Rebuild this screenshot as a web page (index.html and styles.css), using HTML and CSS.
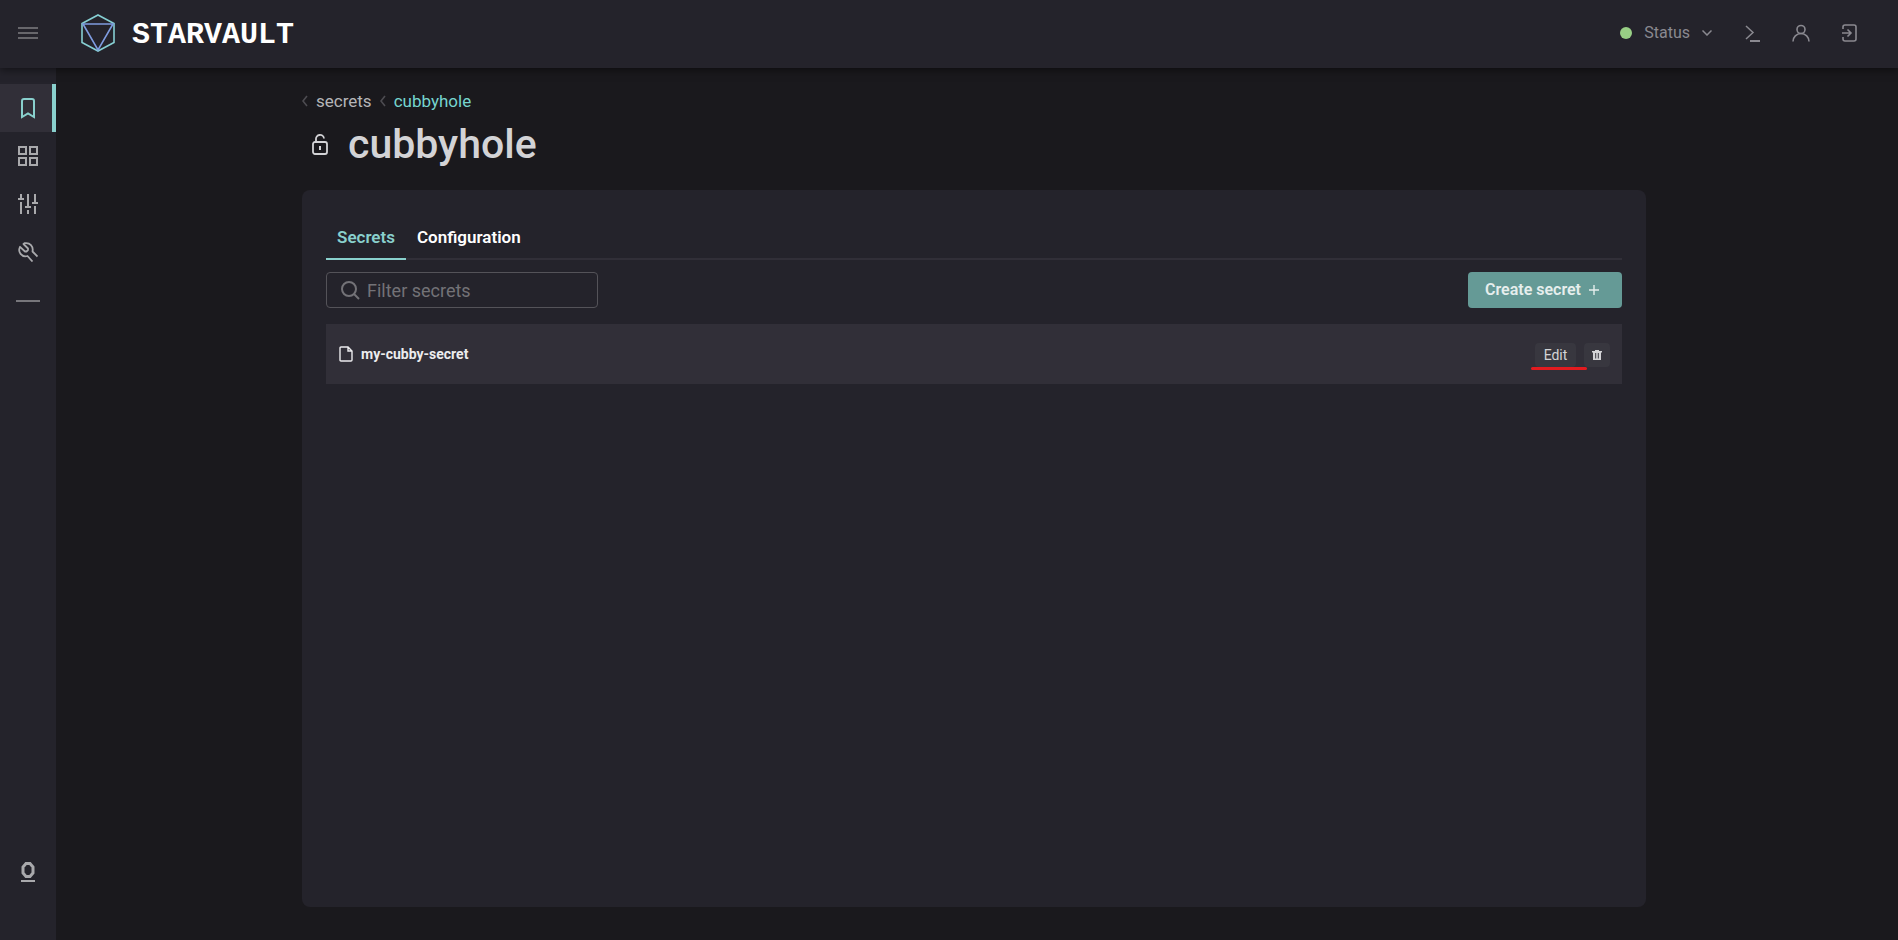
FILE: index.html
```html
<!DOCTYPE html>
<html lang="en">
<head>
<meta charset="utf-8">
<title>StarVault – cubbyhole</title>
<link rel="stylesheet" href="styles.css">
</head>
<body>
<header class="topbar">
  <button class="icon-btn menu-btn" aria-label="Toggle menu">
    <svg width="20" height="12" viewBox="0 0 20 12"><path d="M0 1h20M0 6h20M0 11h20" stroke-width="2"/></svg>
  </button>
  <a class="brand" href="#">
    <svg width="34" height="38" viewBox="0 0 34 38">
      <path d="M17 1 33 9.500V28.500L17 37 1 28.500V9.500Z" stroke="#86cfd3" stroke-width="1.600"/>
      <path d="M2 10h30L17 36Z" stroke="#7f9ce0" stroke-width="1.600"/>
    </svg>
    <span class="wordmark">STARVAULT</span>
  </a>
  <nav class="top-actions" aria-label="Account">
    <button class="status"><span class="status-dot"></span>Status
      <svg width="10" height="6" viewBox="0 0 10 6"><path d="M.5.5 5 5 9.500.5" stroke-width="1.500"/></svg>
    </button>
    <button class="icon-btn" aria-label="Console">
      <svg width="16" height="18" viewBox="0 0 16 18"><path d="M1 2l7 6.500L1 15" stroke-width="1.500"/><path d="M5 17h10" stroke-width="2"/></svg>
    </button>
    <button class="icon-btn" aria-label="User">
      <svg width="18" height="18" viewBox="0 0 18 18"><circle cx="9" cy="5.500" r="4" stroke-width="1.600"/><path d="M1 17.500c0-4.500 3.500-8 8-8s8 3.500 8 8" stroke-width="1.600"/></svg>
    </button>
    <button class="icon-btn" aria-label="Log out">
      <svg width="16" height="18" viewBox="0 0 16 18"><path d="M2 5V3q0-2 2-2h9q2 0 2 2v12q0 2-2 2H4q-2 0-2-2v-2M1 9h9M6.500 5.500 10 9l-3.500 3.500" stroke-width="1.600"/></svg>
    </button>
  </nav>
</header>
<div class="shell">
  <nav class="sidebar" aria-label="Main">
    <a class="side-link active" href="#" aria-label="Secrets">
      <svg width="16" height="22" viewBox="0 0 16 22"><path d="M2 20V4q0-2 2-2h8q2 0 2 2v16l-6-3.500Z" stroke-width="2"/></svg>
    </a>
    <a class="side-link" href="#" aria-label="Dashboard">
      <svg width="20" height="20" viewBox="0 0 20 20"><path d="M1 1h7v7H1ZM12 1h7v7h-7ZM1 12h7v7H1ZM12 12h7v7h-7Z" stroke-width="2"/></svg>
    </a>
    <a class="side-link" href="#" aria-label="Policies">
      <svg width="20" height="20" viewBox="0 0 20 20"><path d="M3 0v6M3 8v12M0 5h6M10 0v12M10 16v4M7 13h6M17 0v8M17 12v8M14 9h6" stroke-width="2"/></svg>
    </a>
    <a class="side-link" href="#" aria-label="Tools">
      <svg width="20" height="20" viewBox="0 0 20 20"><path d="M19.500 14.500 14.500 9.500C15.600 4.500 12 .2 6.500 1.200L5.500 2l4.500 4.500v1.500L8.500 9.500H7L2 4.800C-.5 10 3.500 15.500 9.500 14l5 5.500" stroke-width="1.800" stroke-linejoin="round"/></svg>
    </a>
    <hr class="side-rule">
    <a class="side-foot" href="#" aria-label="About">
      <svg width="14" height="20" viewBox="0 0 14 20"><path d="M5 1.500h4L12 5v6l-3 3.500H5L2 11V5Z" stroke-width="3"/><path d="M0 19h14" stroke-width="2"/></svg>
    </a>
  </nav>
  <main class="content">
    <nav class="crumbs" aria-label="Breadcrumb">
      <svg width="6" height="12" viewBox="0 0 6 12"><path d="M5 1 1 6l4 5" stroke-width="1.600"/></svg>
      <a href="#">secrets</a>
      <svg width="6" height="12" viewBox="0 0 6 12"><path d="M5 1 1 6l4 5" stroke-width="1.600"/></svg>
      <a class="current" href="#" aria-current="page">cubbyhole</a>
    </nav>
    <div class="heading">
      <svg width="16" height="21" viewBox="0 0 16 21"><path d="M4 8V5.500a4 4 0 0 1 8-1" stroke-width="1.800"/><rect x="1" y="8" width="14" height="12" rx="2" stroke-width="1.800"/><path d="M8 12v4" stroke-width="2"/></svg>
      <h1>cubbyhole</h1>
    </div>
    <section class="panel">
      <nav class="tabs" aria-label="Engine">
        <a class="tab selected" href="#">Secrets</a>
        <a class="tab" href="#">Configuration</a>
      </nav>
      <div class="toolbar">
        <label class="filter">
          <svg width="19" height="19" viewBox="0 0 19 19"><circle cx="8" cy="8" r="7" stroke-width="2"/><path d="m13 13 5 5" stroke-width="2"/></svg>
          <input type="text" placeholder="Filter secrets" aria-label="Filter secrets">
        </label>
        <button class="create">Create secret
          <svg width="10" height="12" viewBox="0 0 10 12"><path d="M0 6h10M5 1v10" stroke-width="1.400"/></svg>
        </button>
      </div>
      <div class="row">
        <a class="secret" href="#">
          <svg width="14" height="16" viewBox="0 0 14 16"><path d="M1 2q0-1 1-1h7l4 4v9q0 1-1 1H2q-1 0-1-1ZM9 1v4h4" stroke-width="1.400"/></svg>
          my-cubby-secret
        </a>
        <div class="row-actions">
          <button class="chip edit">Edit</button>
          <button class="chip trash" aria-label="Delete">
            <svg width="10" height="10" viewBox="0 0 10 10"><path d="M3 0h4v1h3v1.500H9V10H1V2.500H0V1h3ZM3.200 3v5.500h1V3ZM5.800 3v5.500h1V3Z" fill-rule="evenodd"/></svg>
          </button>
        </div>
      </div>
    </section>
  </main>
</div>
</body>
</html>
```
FILE: styles.css
```css
* { box-sizing: border-box; }
body {
  margin: 0;
  min-height: 100vh;
  display: flex;
  flex-direction: column;
  background: #1a191d;
  color: #d3d3d6;
  font-family: Roboto, "Noto Sans", sans-serif;
  font-size: 17px;
  line-height: 24px;
}
a { color: inherit; text-decoration: none; }
button { border: 0; background: none; color: inherit; font: inherit; padding: 0; cursor: pointer; }
svg { display: block; flex: none; fill: none; stroke: currentColor; }

.topbar {
  position: relative;
  display: flex;
  align-items: center;
  height: 68px;
  padding: 0 25px 2px 0;
  background: #24232b;
  box-shadow: 0 2px 8px rgba(0, 0, 0, .5);
}
.icon-btn { display: grid; place-items: center; width: 48px; height: 48px; }
.menu-btn { width: 56px; margin-right: 25px; color: #67666b; }
.brand { display: flex; align-items: center; gap: 17px; }
.wordmark {
  padding-top: 3px;
  color: #fff;
  font: bold 30px/36px "Liberation Mono", monospace;
}
.top-actions { display: flex; align-items: center; margin-left: auto; color: #8a8990; }
.status { display: flex; align-items: center; gap: 12px; margin-right: 17px; font-size: 16px; }
.status-dot { width: 12px; height: 12px; border-radius: 50%; background: #98cf85; }

.shell { flex: 1; display: flex; padding-right: 6px; }
.sidebar {
  display: flex;
  flex-direction: column;
  align-items: center;
  width: 56px;
  padding: 16px 0 58px;
  background: #24232b;
  color: #a9a9ac;
}
.side-link { display: grid; place-items: center; width: 100%; height: 48px; }
.side-link.active {
  background: #312f38;
  color: #89d0cd;
  box-shadow: inset -4px 0 #89d0cd;
}
.side-rule { width: 24px; height: 2px; margin: 24px 0 0; border: 0; background: #77767b; }
.side-foot { margin-top: auto; }

.content {
  flex: 1;
  display: flex;
  flex-direction: column;
  width: 100%;
  max-width: 1344px;
  margin: 0 auto;
  padding: 21px 0 33px;
}
.crumbs { display: flex; align-items: center; gap: 8px; color: #b5b5b8; }
.crumbs svg { color: #4d4c51; }
.crumbs .current { color: #76d5cf; }
.heading { display: flex; align-items: center; gap: 20px; padding: 3px 0 17px 10px; }
h1 { margin: 0; font-size: 41px; font-weight: 500; line-height: 57px; }

.panel { flex: 1; padding: 24px; border-radius: 8px; background: #24232b; }
.tabs { display: flex; height: 46px; border-bottom: 2px solid #312f38; }
.tab {
  height: 46px;
  padding: 11px 11px 0;
  color: #fff;
  font-weight: 600;
}
.tab.selected { color: #89d0cd; border-bottom: 2px solid #89d0cd; }
.toolbar { display: flex; justify-content: space-between; margin: 12px 0 16px; }
.filter {
  display: flex;
  align-items: center;
  gap: 7px;
  width: 272px;
  height: 36px;
  padding: 0 14px;
  border: 1px solid #545359;
  border-radius: 4px;
  color: #737277;
}
.filter input {
  flex: 1;
  min-width: 0;
  padding: 2px 0 0;
  border: 0;
  outline: 0;
  background: none;
  color: #d3d3d6;
  font: inherit;
  font-size: 18px;
}
.filter input::placeholder { color: #737277; opacity: 1; }
.create {
  display: flex;
  align-items: center;
  gap: 8px;
  height: 36px;
  padding: 0 23px 0 17px;
  border-radius: 4px;
  background: #659a96;
  color: #e6eeed;
  font-size: 16px;
  font-weight: 600;
}
.row {
  display: flex;
  align-items: center;
  justify-content: space-between;
  height: 60px;
  padding: 0 12px 0 13px;
  background: #312f38;
}
.secret { display: flex; align-items: center; gap: 8px; color: #ececee; font-size: 14px; font-weight: 700; }
.row-actions { display: flex; gap: 8px; padding-top: 2px; }
.chip { display: grid; place-items: center; height: 24px; border-radius: 4px; background: #38373f; font-size: 14px; }
.edit { position: relative; width: 41px; }
.edit::after {
  content: "";
  position: absolute;
  left: -4px;
  right: -11px;
  bottom: -3px;
  height: 3px;
  border-radius: 2px;
  background: #e31b1f;
}
.trash { width: 26px; }
.trash svg { fill: currentColor; stroke: none; }
```
